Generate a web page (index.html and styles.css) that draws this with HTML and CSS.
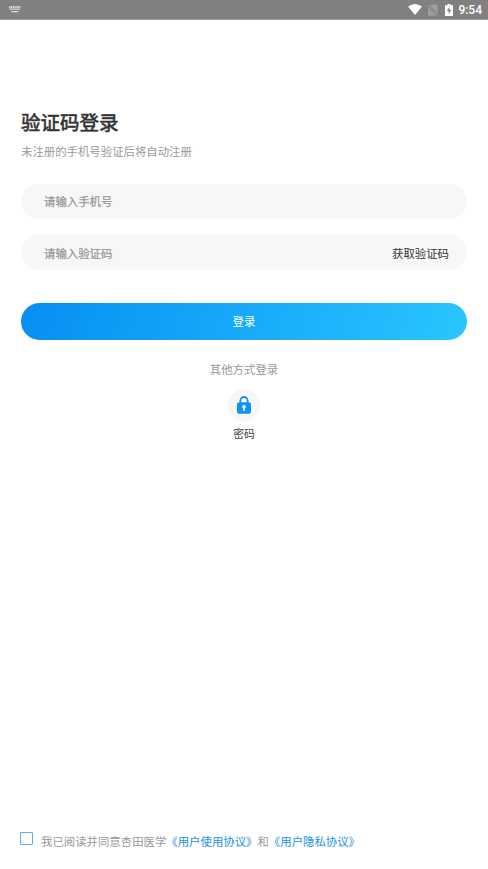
FILE: index.html
```html
<!DOCTYPE html>
<html lang="zh-CN">
<head>
<meta charset="utf-8">
<title>验证码登录</title>
<link rel="stylesheet" href="styles.css">
</head>
<body>
<header class="status">
  <svg class="keyboard" width="12" height="7" viewBox="0 0 12 7"><path d="M0 1h11.5M.5 3.2h11" stroke="#eee" stroke-width="1.3" stroke-dasharray="1.4 .4"/><path d="M2.3 5.7h7" stroke="#eee" stroke-width="1.1"/></svg>
  <div class="indicators">
    <svg class="wifi" width="14" height="11" viewBox="0 0 14 11"><path d="M0 2.6Q7-2.4 14 2.6L7 11Z" fill="#fff"/></svg>
    <svg class="sim" width="11" height="12" viewBox="0 0 11 12"><path d="M4.5.5h6v9L3 2ZM1 3.5 9 11.5H1Z" fill="#a0a0a0"/><path d="m.5 1.5 10 10" stroke="#a8a8a8" stroke-width=".8"/></svg>
    <svg class="battery" width="8" height="12" viewBox="0 0 8 12"><path d="M2.5 0h3v1.2H8V12H0V1.2h2.5Z" fill="#fff"/><path d="M4.5 2.7 1.8 7h1.9v3.2L6.3 6H4.5Z" fill="#808080"/></svg>
    <span class="clock">9:54</span>
  </div>
</header>
<main class="login">
  <h1 class="title">验证码登录</h1>
  <p class="hint">未注册的手机号验证后将自动注册</p>
  <div class="field"><span class="placeholder">请输入手机号</span></div>
  <div class="field code"><span class="placeholder">请输入验证码</span><span class="get-code">获取验证码</span></div>
  <button class="submit">登录</button>
  <p class="other">其他方式登录</p>
  <div class="method">
    <span class="lock"><svg width="14" height="18" viewBox="0 0 14 18"><path d="M3.4 8V4.6a3.6 3.6 0 0 1 7.2 0V8" fill="none" stroke="#0f93f4" stroke-width="1.8"/><rect y="6.3" width="14" height="11.5" rx="2" fill="#0f93f4"/><circle cx="7" cy="10.8" r="1.8" fill="#fff"/><path d="M7 11v4" stroke="#fff" stroke-width="1.4"/></svg></span>
    <span class="method-name">密码</span>
  </div>
</main>
<footer class="agreement">
  <span class="checkbox"></span>
  <p class="terms">我已阅读并同意杏田医学<a>《用户使用协议》</a>和<a>《用户隐私协议》</a></p>
</footer>
</body>
</html>
```
FILE: styles.css
```css
* { box-sizing: border-box; }
body {
  margin: 0;
  height: 869px;
  display: flex;
  flex-direction: column;
  background: #fff;
  color: #999;
  font: 11.4px/18px "Noto Sans CJK SC", sans-serif;
}
h1, p { margin: 0; }
svg { display: block; flex: none; }
.status {
  height: 20px;
  padding: 0 6px 0 9px;
  display: flex;
  align-items: center;
  justify-content: space-between;
  background: #808080;
  border-bottom: 1px solid #a3a3a3;
}
.indicators { display: flex; align-items: center; }
.sim { margin-left: 5px; }
.battery { margin-left: 7px; }
.clock {
  margin-left: 5px;
  color: #fff;
  font: 500 12px/18px Roboto, sans-serif;
  padding-top: 1px;
}
.login {
  flex: 1;
  padding: 88px 21px 0;
  display: flex;
  flex-direction: column;
}
.title {
  color: #333;
  font-size: 19.5px;
  font-weight: 400;
  line-height: 28px;
  -webkit-text-stroke: 0.6px #333;
}
.hint { margin: 6px 0 24px; }
.field {
  height: 35px;
  margin-bottom: 16px;
  padding: 0 18px 1px 23px;
  display: flex;
  align-items: center;
  justify-content: space-between;
  border-radius: 18px;
  background: #f7f7f7;
}
.code { padding-bottom: 0; }
.placeholder { -webkit-text-stroke: 0.25px #999; }
.get-code { color: #333; }
.submit {
  height: 37px;
  margin: 17px 0 20px;
  padding: 0 0 1px;
  border: 0;
  border-radius: 19px;
  background: linear-gradient(105deg, #068ff3, #2ac5ff);
  color: #fff;
  font: inherit;
}
.other { text-align: center; }
.method {
  margin-top: 11px;
  display: flex;
  flex-direction: column;
  align-items: center;
}
.lock {
  width: 32px;
  height: 32px;
  display: grid;
  place-items: center;
  border-radius: 50%;
  background: #f7f7f7;
}
.method-name {
  margin-top: 3px;
  color: #444;
  font-size: 10.8px;
}
.agreement {
  height: 37px;
  padding-left: 20px;
  display: flex;
  align-items: flex-start;
}
.checkbox {
  width: 13px;
  height: 13px;
  border: 1px solid #5cb0ea;
  border-radius: 1px;
}
.terms { margin-left: 8px; }
.terms a { color: #168fe8; }
```
